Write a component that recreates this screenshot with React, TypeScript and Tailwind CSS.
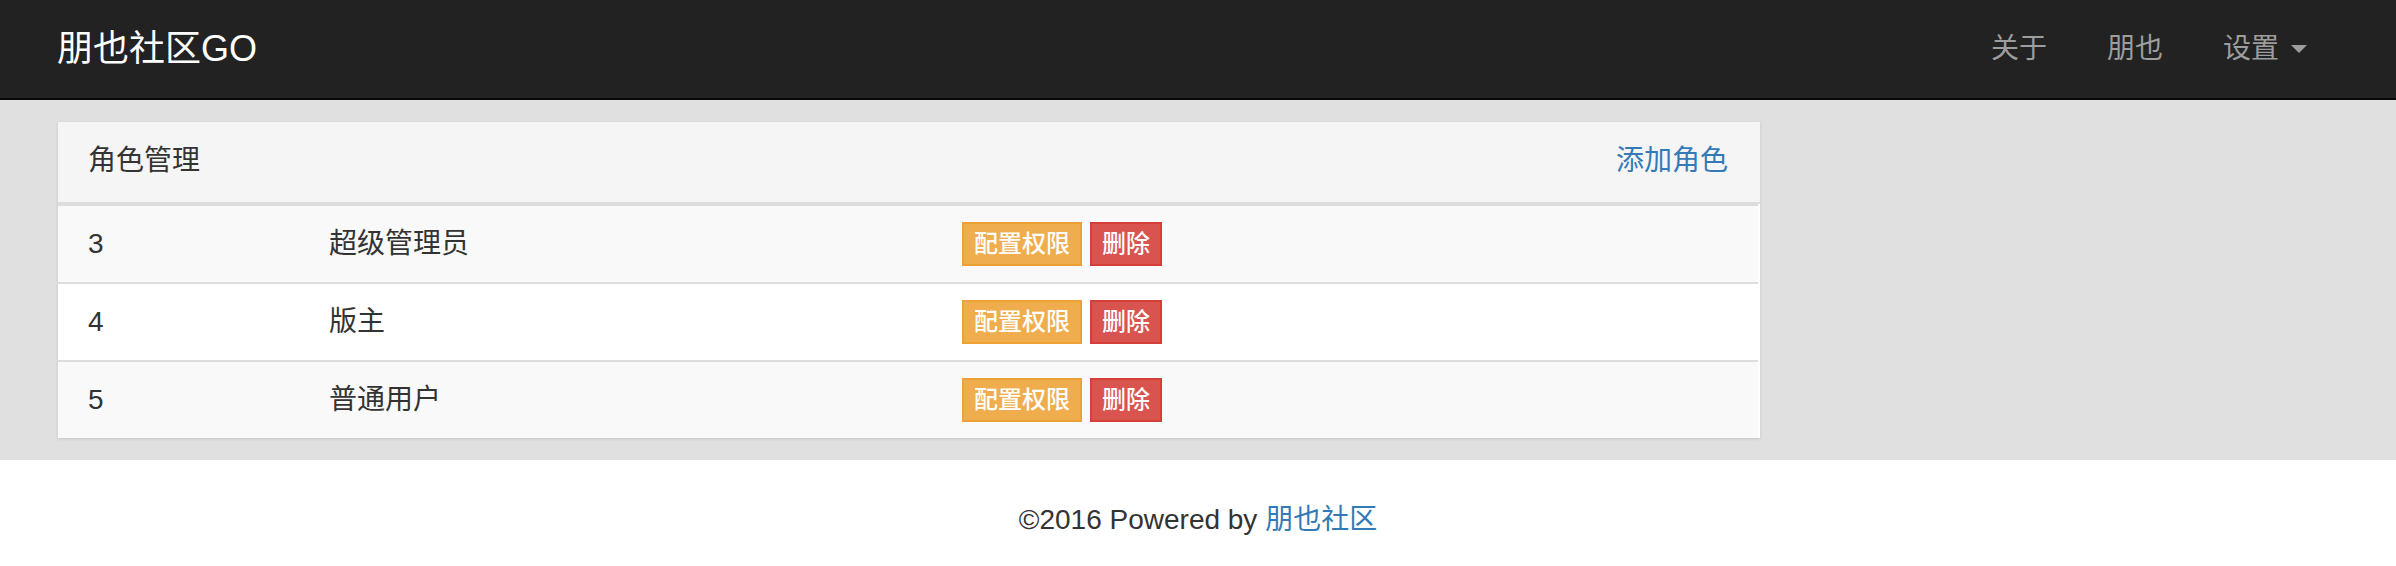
import React from "react";

const font = {
  fontFamily: '"Liberation Sans", "Noto Sans CJK SC", sans-serif',
};

const roles = [
  { id: 3, name: "超级管理员" },
  { id: 4, name: "版主" },
  { id: 5, name: "普通用户" },
];

export default function App() {
  return (
    <div className="min-h-screen bg-white text-[#333]" style={font}>
      {/* Navbar */}
      <nav className="flex h-[100px] items-center justify-between border-b-2 border-[#080808] bg-[#222222] pl-[57px] pr-[59px]">
        <a href="#" className="text-[36px] leading-none text-white">
          朋也社区GO
        </a>
        <ul className="flex items-center text-[28px] text-[#9d9d9d]">
          <li className="px-[30px]">关于</li>
          <li className="px-[30px]">朋也</li>
          <li className="flex items-center px-[30px]">
            设置
            <span className="ml-3 h-0 w-0 border-x-[8px] border-t-[8px] border-x-transparent border-t-[#9d9d9d]" />
          </li>
        </ul>
      </nav>

      {/* Content */}
      <div className="bg-[#e0e0e0] pb-[22px] pl-[58px] pt-[22px]">
        <div className="w-[1702px] bg-white shadow-[0_1px_3px_rgba(0,0,0,0.12)]">
          <div className="flex h-[82px] items-center justify-between border-b-2 border-[#ddd] bg-[#f5f5f5] pb-[2px] pl-[30px] pr-[32px] text-[28px]">
            <span>角色管理</span>
            <a href="#" className="text-[#337ab7]">
              添加角色
            </a>
          </div>
          <div className="pr-[2px]">
            {roles.map((r, i) => (
              <div
                key={r.id}
                className={
                  "flex h-[78px] items-center border-t-2 border-[#ddd] text-[28px] " +
                  (i % 2 === 0 ? "bg-[#f9f9f9]" : "bg-white")
                }
              >
                <div className="w-[241px] pl-[30px]">{r.id}</div>
                <div className="w-[633px] pl-[30px]">{r.name}</div>
                <div className="flex gap-2 pl-[30px]">
                  <button className="h-[44px] border-2 border-[#eea236] bg-[#f0ad4e] px-[10px] text-[24px] font-medium leading-[36px] text-white">
                    配置权限
                  </button>
                  <button className="h-[44px] border-2 border-[#d43f3a] bg-[#d9534f] px-[10px] text-[24px] font-medium leading-[36px] text-white">
                    删除
                  </button>
                </div>
              </div>
            ))}
          </div>
        </div>
      </div>

      {/* Footer */}
      <footer className="pt-[40px] text-center text-[28px] leading-[40px]">
        ©2016 Powered by{" "}
        <a href="#" className="text-[#337ab7]">
          朋也社区
        </a>
      </footer>
    </div>
  );
}
